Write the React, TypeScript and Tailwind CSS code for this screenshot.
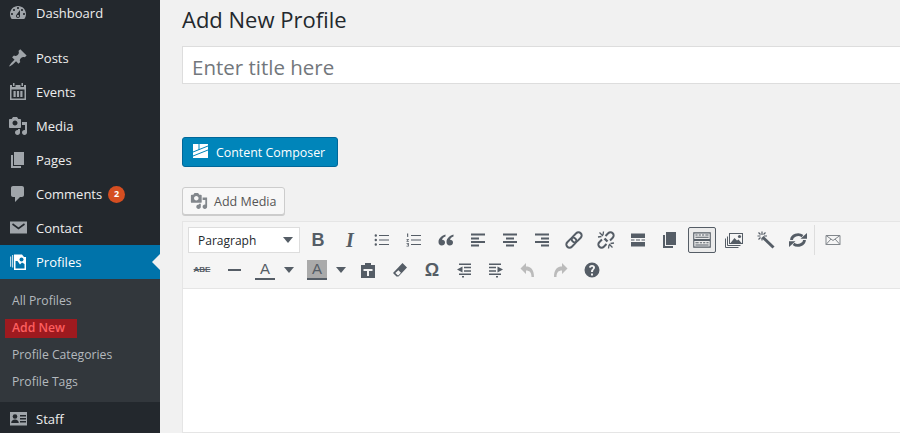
import type { ReactNode } from "react"

const FONT = "font-['Open_Sans','Noto_Sans',sans-serif]"

const Ic = ({ children, size = 20, className = "" }: { children: ReactNode; size?: number; className?: string }) => (
  <svg width={size} height={size} viewBox="0 0 20 20" fill="currentColor" className={className}>
    {children}
  </svg>
)

const icons: Record<string, ReactNode> = {
  dashboard: <path d="M3.76 16h12.48c1.1-1.37 1.76-3.11 1.76-5 0-4.42-3.58-8-8-8s-8 3.58-8 8c0 1.89.66 3.63 1.76 5zM10 4c.55 0 1 .45 1 1s-.45 1-1 1-1-.45-1-1 .45-1 1-1zM6 6c.55 0 1 .45 1 1s-.45 1-1 1-1-.45-1-1 .45-1 1-1zm8 0c.55 0 1 .45 1 1s-.45 1-1 1-1-.45-1-1 .45-1 1-1zm-5.37 5.55L12 7v6c0 1.1-.9 2-2 2s-2-.9-2-2c0-.57.24-1.08.63-1.45zM4 10c.55 0 1 .45 1 1s-.45 1-1 1-1-.45-1-1 .45-1 1-1zm12 0c.55 0 1 .45 1 1s-.45 1-1 1-1-.45-1-1 .45-1 1-1zm-5 3c0-.55-.45-1-1-1s-1 .45-1 1 .45 1 1 1 1-.45 1-1z" fillRule="evenodd" />,
  pin: <path d="M10.44 3.02l1.82-1.82 6.36 6.35-1.83 1.82c-1.05-.68-2.48-.57-3.41.36l-.75.75c-.92.93-1.04 2.35-.35 3.41l-1.83 1.82-2.41-2.41-2.8 2.79c-.42.42-3.38 2.71-3.8 2.29s1.86-3.39 2.28-3.81l2.79-2.79L4.1 9.36l1.83-1.82c1.05.69 2.48.57 3.4-.36l.75-.75c.93-.92 1.05-2.35.36-3.41z" />,
  calendar: <path d="M5 1h1.500v3H5zM13.500 1H15v3h-1.500zM2 3h2v2h3.500V3h5v2H16V3h2v15H2zM3.500 7.500v9h13v-9zM5.500 9h2.200v6H5.500zM8.900 9h2.200v6H8.900zM12.300 9h2.200v6h-2.200z" fillRule="evenodd" />,
  media: <path d="M13 11V4c0-.55-.45-1-1-1h-1.670L9 1H5L3.670 3H2c-.55 0-1 .45-1 1v7c0 .55.45 1 1 1h10c.55 0 1-.45 1-1zM7 4.500c1.380 0 2.500 1.120 2.500 2.500S8.380 9.500 7 9.500 4.500 8.380 4.500 7 5.620 4.500 7 4.500zM14 6h5v10.500c0 1.380-1.120 2.500-2.500 2.500S14 17.880 14 16.500s1.120-2.500 2.500-2.500c.17 0 .34.020.5.050V9h-3V6zm-4 8.050V13h2v3.500c0 1.380-1.120 2.500-2.500 2.500S7 17.880 7 16.500 8.120 14 9.500 14c.17 0 .34.020.5.050z" fillRule="evenodd" />,
  pages: <path d="M6 15V2h10v13H6zm-1 1h8v2H3V5h2v11z" />,
  comment: <path d="M5 2h9c1.100 0 2 .9 2 2v7c0 1.100-.9 2-2 2h-2l-5 5v-5H5c-1.100 0-2-.9-2-2V4c0-1.100.9-2 2-2z" />,
  mail: (
    <>
      <rect x="2" y="3.500" width="17" height="12" />
      <path d="M4.500 6l6 4.500 6-4.500" fill="none" stroke="#23282d" strokeWidth="1.600" />
    </>
  ),
  profiles: (
    <>
      <path d="M2 4.500h1.200v10.300H2zM4 3h1.200v12.500H4z" opacity="0.75" />
      <path d="M6 2.500h8L16 5h2v13H6z" />
      <path d="M7.500 9v7.500h9V12l-2.500-1.500-2 2-2.500-3.500z" fill="#0073aa" />
      <circle cx="13.500" cy="7.500" r="2" fill="#0073aa" />
    </>
  ),
  staff: (
    <>
      <rect x="2" y="3" width="17" height="13.500" />
      <circle cx="7" cy="7.500" r="2.300" fill="#23282d" />
      <path d="M3.200 14c0-2.300 1.700-3.500 3.800-3.500s3.800 1.200 3.800 3.500zM12 6h6v1.400h-6zM12 9h6v1.400h-6zM12 12h6v1.400h-6z" fill="#23282d" />
    </>
  ),
}

const MenuRow = ({ icon, label, badge }: { icon: string; label: string; badge?: string }) => (
  <div className="flex h-[34px] shrink-0 items-center pl-[8px] text-[13px] text-[#eee]">
    <span className="flex w-[28px] shrink-0 text-[#a0a5aa]">
      <Ic>{icons[icon]}</Ic>
    </span>
    <span className="pt-[2px]">{label}</span>
    {badge && (
      <span className="ml-[6px] flex size-[17px] items-center justify-center rounded-full bg-[#d54e21] text-[9px] font-bold text-white">
        {badge}
      </span>
    )}
  </div>
)

const Sidebar = () => (
  <aside className="flex h-full w-[160px] shrink-0 flex-col overflow-hidden bg-[#23282d]">
    <div className="-mt-[4px] mb-[11px] shrink-0">
      <MenuRow icon="dashboard" label="Dashboard" />
    </div>
    <MenuRow icon="pin" label="Posts" />
    <MenuRow icon="calendar" label="Events" />
    <MenuRow icon="media" label="Media" />
    <MenuRow icon="pages" label="Pages" />
    <MenuRow icon="comment" label="Comments" badge="2" />
    <MenuRow icon="mail" label="Contact" />
    <div className="relative flex h-[34px] shrink-0 items-center bg-[#0073aa] pl-[8px] text-[13px] text-white">
      <span className="flex w-[28px] shrink-0">
        <Ic>{icons.profiles}</Ic>
      </span>
      <span className="pt-[2px]">Profiles</span>
      <span className="absolute right-0 top-[9px] border-y-[8px] border-r-[8px] border-y-transparent border-r-[#f1f1f1]" />
    </div>
    <div className="flex shrink-0 flex-col bg-[#32373c] pb-[7px] pt-[8px] text-[12.2px] text-[#b4b9be]">
      <div className="flex h-[27px] items-center pl-[12px] pt-[2px]">All Profiles</div>
      <div className="flex h-[27px] items-center pl-[5px] pt-[2px]">
        <span className="flex h-[19px] w-[72px] items-center bg-[#9e1a1f] pl-[7px] font-semibold text-[#ff5f5f]">Add New</span>
      </div>
      <div className="flex h-[27px] items-center pl-[12px] pt-[2px]">Profile Categories</div>
      <div className="flex h-[27px] items-center pl-[12px] pt-[2px]">Profile Tags</div>
    </div>
    <MenuRow icon="staff" label="Staff" />
  </aside>
)

const Tool = ({ children, className = "" }: { children: ReactNode; className?: string }) => (
  <span className={`flex h-[26px] w-[32px] shrink-0 items-center justify-center ${className || "text-[#555d66]"}`}>{children}</span>
)

const Caret = () => <span className="border-x-[5px] border-t-[6px] border-x-transparent border-t-[#555d66]" />

const Line = ({ d, w = 2 }: { d: string; w?: number }) => (
  <Ic>
    <path d={d} fill="none" stroke="currentColor" strokeWidth={w} />
  </Ic>
)

const Toolbar = () => (
  <div className="border-b border-[#e5e5e5] bg-[#f5f5f5] pb-[5px] pl-[3px] pt-[5px]">
    <div className="flex h-[26px] items-center">
      <div className="mx-[2px] flex h-[26px] w-[112px] items-center justify-between border border-[#ddd] bg-white pl-[9px] pr-[6px] text-[12px] text-[#23282d]">
        <span className="pt-[2px]">Paragraph</span>
        <Caret />
      </div>
      <Tool><span className="font-['Liberation_Sans'] text-[18px] font-bold">B</span></Tool>
      <Tool><span className="font-['Liberation_Serif'] text-[20px] font-bold italic">I</span></Tool>
      <Tool>
        <Ic>
          <path d="M5 5.500a1.200 1.200 0 1 1-2.400 0 1.200 1.200 0 0 1 2.400 0zM5 10a1.200 1.200 0 1 1-2.400 0 1.200 1.200 0 0 1 2.400 0zM5 14.500a1.200 1.200 0 1 1-2.400 0 1.200 1.200 0 0 1 2.400 0zM7 5h10v1H7zM7 9.500h10v1H7zM7 14h10v1H7z" />
        </Ic>
      </Tool>
      <Tool>
        <Ic>
          <path d="M7 5h10v1H7zM7 9.500h10v1H7zM7 14h10v1H7zM3 3.500h1.200v3.500H3.200zM2.500 9h2.300v.8L3.500 11h1.300v.8H2.500V11l1.400-1.300H2.500zM2.500 13h2.300v3.500H2.500v-.7h1.500v-.7H3v-.6h1v-.7H2.500z" />
        </Ic>
      </Tool>
      <Tool>
        <Ic>
          <path d="M9.500 4.500C6 5.500 2.500 8 2.500 12c0 2 1.300 3.500 3.200 3.500S9 14.200 9 12.500 7.800 9.800 6 9.800c.3-1.600 1.800-2.800 3.500-3.300zM17.500 4.500C14 5.500 10.500 8 10.500 12c0 2 1.300 3.500 3.200 3.500s3.300-1.300 3.300-3c0-1.700-1.200-2.700-3-2.700.3-1.600 1.800-2.800 3.500-3.300z" />
        </Ic>
      </Tool>
      <Tool><Line d="M3 4.500h14M3 8.500h8M3 12h14M3 15.500h8" /></Tool>
      <Tool><Line d="M3 4.500h14M6 8.500h8M3 12h14M6 15.500h8" /></Tool>
      <Tool><Line d="M3 4.500h14M9 8.500h8M3 12h14M9 15.500h8" /></Tool>
      <Tool>
        <svg width="20" height="20" viewBox="0 0 20 20" fill="none" stroke="currentColor" strokeWidth="2">
          <g transform="rotate(-45 10 10)">
            <rect x="0.500" y="6.800" width="11.500" height="6.400" rx="3.200" />
            <rect x="8" y="6.800" width="11.500" height="6.400" rx="3.200" />
          </g>
        </svg>
      </Tool>
      <Tool>
        <svg width="20" height="20" viewBox="0 0 20 20" fill="none" stroke="currentColor" strokeWidth="2">
          <g transform="rotate(-45 10 10)">
            <path d="M7.500 6.800H3.700a3.200 3.200 0 0 0 0 6.400h3.800M12.500 6.800h3.800a3.200 3.200 0 0 1 0 6.400h-3.800" />
          </g>
          <path d="M3.500 2.500l3.500 3.500M2 7l3.500-.5M7.500 1.500L7 5M16.500 17.500L13 14M18 13l-3.500.5M12.500 18.500L13 15" strokeWidth="1.300" />
          <path d="M8.500 8.500l3 3" strokeWidth="2.400" />
        </svg>
      </Tool>
      <Tool>
        <Ic>
          <path d="M3 3.500h14v4.500H3zM3 12h14v4.500H3zM3 9.500h3.500v1H3zM8 9.500h4v1H8zM13.500 9.500H17v1h-3.500z" />
        </Ic>
      </Tool>
      <Tool><Ic>{icons.pages}</Ic></Tool>
      <span className="mx-[2px] flex h-[26px] w-[28px] shrink-0 items-center justify-center rounded-[2px] border border-[#555d66] bg-[#ebebeb] text-[#555d66]">
        <Ic size={22}>
          <path d="M2.500 3.500h15v6h-15zM2.500 10.500h15v6h-15z" fill="none" stroke="currentColor" strokeWidth="1" />
          <path d="M4 5h2v1H4zM7 5h2v1H7zM10 5h2v1h-2zM13 5h3v1h-3zM4 7h12v1H4zM4 12h3v1H4zM8 12h2v1H8zM11 12h2v1h-2zM14 12h2v1h-2zM4 14h12v1H4z" />
        </Ic>
      </span>
      <Tool>
        <svg width="20" height="20" viewBox="0 0 20 20" fill="none" stroke="currentColor">
          <path d="M1.500 8.500v9h13M3.500 6.500v9h13" strokeWidth="1" />
          <rect x="5.500" y="3.500" width="13" height="10" fill="#f5f5f5" strokeWidth="1" />
          <path d="M6.500 13l4-5 2.500 2.500 1.500-1 3 3.500z" fill="currentColor" stroke="none" />
          <circle cx="15.500" cy="6.500" r="1.600" fill="currentColor" stroke="none" />
        </svg>
      </Tool>
      <Tool>
        <Ic>
          <path d="M6.500 7l11 10.500" fill="none" stroke="currentColor" strokeWidth="3" />
          <path d="M6 1.500v3.500M6 8v2.500M1.500 6H4.500M8 6h3M2.500 2.500l2 2M9.500 2.500l-2 2M2.500 9.500l2-2" fill="none" stroke="currentColor" strokeWidth="1.200" />
        </Ic>
      </Tool>
      <Tool>
        <Ic>
          <path d="M3.500 10a6.500 5.500 0 0 1 11-3.800M16.500 10a6.500 5.500 0 0 1-11 3.800" fill="none" stroke="currentColor" strokeWidth="2.800" />
          <path d="M12.500 8.800h6.500V3zM7.500 11.200H1V17z" />
        </Ic>
      </Tool>
      <span className="h-[30px] w-px bg-[#ddd]" />
      <Tool className="ml-[2px] text-[#82878c]">
        <Ic>
          <path d="M3 5.500h14v9H3zM3 5.500L10 10.500l7-5M3 14.500L8 9M17 14.500L12 9" fill="none" stroke="currentColor" strokeWidth="1" />
        </Ic>
      </Tool>
    </div>
    <div className="mt-[4px] flex h-[26px] items-center">
      <Tool><span className="font-['Liberation_Sans'] text-[8px] font-bold text-[#555d66] line-through">ABE</span></Tool>
      <Tool><span className="h-[2px] w-[13px] bg-[#555d66]" /></Tool>
      <span className="flex h-[26px] w-[50px] shrink-0 items-center justify-between pr-[6px] text-[#555d66]">
        <span className="ml-[5px] flex h-[20px] w-[20px] flex-col items-center border-b-[2px] border-[#555d66] font-['Liberation_Sans'] text-[15px] leading-[18px]">A</span>
        <Caret />
      </span>
      <span className="flex h-[26px] w-[52px] shrink-0 items-center justify-between pl-[7px] pr-[6px] text-[#555d66]">
        <span className="flex h-[20px] w-[20px] flex-col items-center border-b-[2px] border-[#555d66] bg-[#aaa] font-['Liberation_Sans'] text-[15px] leading-[18px]">A</span>
        <Caret />
      </span>
      <Tool>
        <Ic>
          <path d="M3 5h4V3h6v2h4v13H3zM5.500 9v2h3.500v5h2v-5h3.500V9z" fillRule="evenodd" />
        </Ic>
      </Tool>
      <Tool>
        <Ic>
          <path d="M12.500 3l4.500 4.500-8.500 9H6.500L3 13zM5.300 13l2.300 2.200 1 0 2.300-2.400-2.500-2.500z" fillRule="evenodd" />
        </Ic>
      </Tool>
      <Tool><span className="font-['Liberation_Sans'] text-[18px] font-bold text-[#555d66]">Ω</span></Tool>
      <Tool>
        <Ic>
          <path d="M5 3.500h12V5H5zM10 6.800h7v1.500h-7zM10 10.200h7v1.500h-7zM5 13.500h12V15H5zM8 16h2v1.500H8zM8.500 6.500v6L3 9.500z" />
        </Ic>
      </Tool>
      <Tool>
        <Ic>
          <path d="M3 3.500h12V5H3zM3 6.800h7v1.500H3zM3 10.200h7v1.500H3zM3 13.500h12V15H3zM10 16h2v1.500h-2zM11.500 6.500v6L17 9.500z" />
        </Ic>
      </Tool>
      <Tool className="text-[#bbb]">
        <Ic>
          <path d="M8 3v3.500c4.500 0 8 2.500 8 10.500h-2.500c0-4.500-2-6.500-5.500-6.500V14L2.500 8.500z" />
        </Ic>
      </Tool>
      <Tool className="text-[#bbb]">
        <Ic>
          <path d="M12 3v3.500c-4.500 0-8 2.500-8 10.500h2.500c0-4.500 2-6.500 5.500-6.500V14l5.500-5.500z" />
        </Ic>
      </Tool>
      <Tool>
        <Ic>
          <path d="M10 2.500a7.500 7.500 0 1 0 0 15 7.500 7.500 0 0 0 0-15zM9 13.500h2V15.500H9zM7 7.500C7 6 8.200 5 10 5s3 1 3 2.500c0 2-2 2-2 4.500H9c0-3 2-3 2-4.300 0-.5-.4-.9-1-.9s-1 .4-1 .9z" fillRule="evenodd" />
        </Ic>
      </Tool>
    </div>
  </div>
)

export default function App() {
  return (
    <div className={`flex h-[433px] w-[900px] overflow-hidden bg-[#f1f1f1] ${FONT}`}>
      <Sidebar />
      <main className="min-w-0 flex-1 pl-[22px]">
        <h1 className="-mr-[10px] h-[46px] pt-[3px] text-[22px] leading-[32px] text-[#23282d]">Add New Profile</h1>
        <div className="-mr-[10px] flex h-[38px] items-center border border-[#ddd] bg-white pl-[9px] pt-[5px] text-[20.5px] text-[#72777c]">
          Enter title here
        </div>
        <button className="mt-[53px] flex h-[30px] w-[156px] items-center rounded-[3px] border border-[#006799] bg-[#0085ba] pl-[10px] text-[12.4px] text-white">
          <svg width="15" height="14" viewBox="0 0 15 14" className="mr-[8px] -translate-y-[1px]">
            <rect width="15" height="14" fill="#fff" />
            <path d="M0 8L15 2M0 12L15 6M6 0v6" stroke="#0085ba" strokeWidth="1" fill="none" />
          </svg>
          <span className="pt-[2px]">Content Composer</span>
        </button>
        <button className="mt-[20px] flex h-[28px] w-[103px] items-center rounded-[3px] border border-[#ccc] bg-[#f7f7f7] pl-[7px] text-[12.5px] text-[#555] shadow-[0_1px_0_#ccc]">
          <span className="mr-[6px] flex text-[#82878c]">
            <Ic size={18}>{icons.media}</Ic>
          </span>
          <span className="pt-[2px]">Add Media</span>
        </button>
        <div className="-mr-[10px] mt-[6px] h-[212px] border border-[#e5e5e5] bg-white">
          <Toolbar />
        </div>
      </main>
    </div>
  )
}
